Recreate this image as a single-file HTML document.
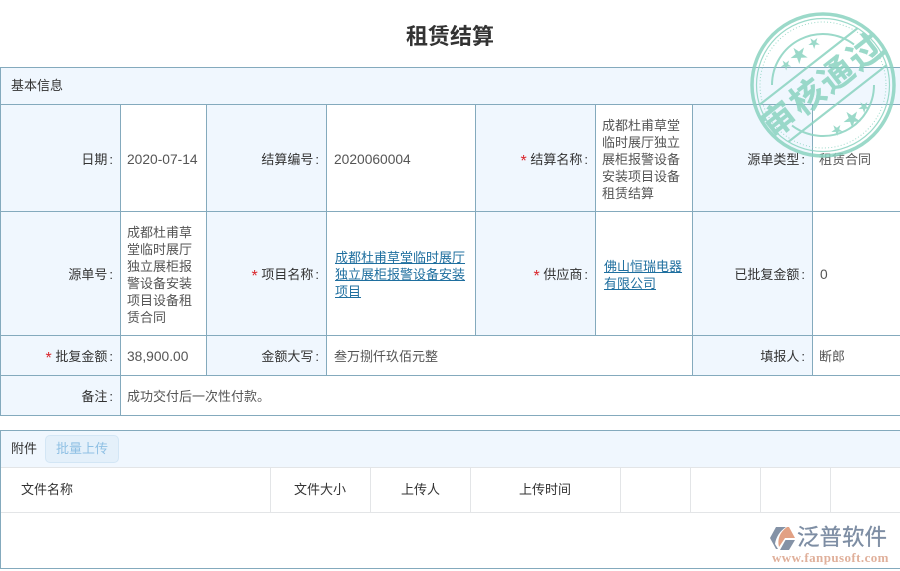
<!DOCTYPE html>
<html lang="zh"><head><meta charset="utf-8"><title>租赁结算</title>
<style>
*{box-sizing:border-box}
html,body{margin:0;padding:0;background:#fff}
body{width:900px;height:571px;position:relative;overflow:hidden;font-family:"Liberation Sans","Noto Sans CJK SC",sans-serif;font-size:13px;color:#333}
.a{position:absolute}
.bg{position:absolute;background:#f0f7fe}
.h{position:absolute;background:#84aabd}
.v{position:absolute;background:#84aabd;width:1px}
.l{position:absolute;text-align:right;line-height:18px;color:#333;white-space:nowrap}
.l i{font-style:normal;margin-left:2px}
.t{position:absolute;line-height:17px;color:#555}
.n{font-size:13.8px}
.s{color:#d9252b;font-size:16px;line-height:10px;vertical-align:-2px}
a{color:#1f6f9f;text-decoration:underline}
.g{position:absolute;background:#e3e5e7}
.c{position:absolute;color:#333;line-height:18px;white-space:nowrap}
</style></head><body>
<div class="a" style="left:0;width:900px;top:21px;text-align:center;font-size:22px;font-weight:bold;line-height:32px;color:#333">租赁结算</div>

<div class="bg" style="left:0;top:67px;width:900px;height:38px"></div>
<div class="bg" style="left:0;top:105px;width:120px;height:310px"></div>
<div class="bg" style="left:207px;top:105px;width:119px;height:270px"></div>
<div class="bg" style="left:476px;top:105px;width:119px;height:230px"></div>
<div class="bg" style="left:693px;top:105px;width:119px;height:270px"></div>

<div class="h" style="left:0;top:67px;width:900px;height:1px"></div>
<div class="h" style="left:0;top:104px;width:900px;height:1px"></div>
<div class="h" style="left:0;top:211px;width:900px;height:1px"></div>
<div class="h" style="left:0;top:335px;width:900px;height:1px"></div>
<div class="h" style="left:0;top:375px;width:900px;height:1px"></div>
<div class="h" style="left:0;top:415px;width:900px;height:1px"></div>
<div class="v" style="left:0;top:67px;height:349px"></div>
<div class="v" style="left:120px;top:104px;height:312px"></div>
<div class="v" style="left:206px;top:104px;height:272px"></div>
<div class="v" style="left:326px;top:104px;height:272px"></div>
<div class="v" style="left:475px;top:104px;height:232px"></div>
<div class="v" style="left:595px;top:104px;height:232px"></div>
<div class="v" style="left:692px;top:104px;height:272px"></div>
<div class="v" style="left:812px;top:104px;height:272px"></div>

<div class="c" style="left:11px;top:77px">基本信息</div>

<div class="l" style="right:787px;top:151px">日期<i>:</i></div>
<div class="t n" style="left:127px;top:151px;white-space:nowrap">2020-07-14</div>
<div class="l" style="right:581px;top:151px">结算编号<i>:</i></div>
<div class="t n" style="left:334px;top:151px;white-space:nowrap">2020060004</div>
<div class="l" style="right:312px;top:151px"><span class="s">*</span> 结算名称<i>:</i></div>
<div class="t" style="left:602px;top:117px;width:84px">成都杜甫草堂临时展厅独立展柜报警设备安装项目设备租赁结算</div>
<div class="l" style="right:95px;top:151px">源单类型<i>:</i></div>
<div class="t" style="left:819px;top:151px;white-space:nowrap">租赁合同</div>

<div class="l" style="right:787px;top:266px">源单号<i>:</i></div>
<div class="t" style="left:127px;top:224px;width:72px">成都杜甫草堂临时展厅独立展柜报警设备安装项目设备租赁合同</div>
<div class="l" style="right:581px;top:266px"><span class="s">*</span> 项目名称<i>:</i></div>
<div class="t" style="left:335px;top:249px;width:132px"><a>成都杜甫草堂临时展厅独立展柜报警设备安装项目</a></div>
<div class="l" style="right:312px;top:266px"><span class="s">*</span> 供应商<i>:</i></div>
<div class="t" style="left:604px;top:258px;width:84px"><a>佛山恒瑞电器有限公司</a></div>
<div class="l" style="right:95px;top:266px">已批复金额<i>:</i></div>
<div class="t n" style="left:820px;top:266px">0</div>

<div class="l" style="right:787px;top:348px"><span class="s">*</span> 批复金额<i>:</i></div>
<div class="t n" style="left:127px;top:348px;white-space:nowrap">38,900.00</div>
<div class="l" style="right:581px;top:348px">金额大写<i>:</i></div>
<div class="t" style="left:334px;top:348px;white-space:nowrap">叁万捌仟玖佰元整</div>
<div class="l" style="right:95px;top:348px">填报人<i>:</i></div>
<div class="t" style="left:819px;top:348px;white-space:nowrap">断郎</div>

<div class="l" style="right:787px;top:388px">备注<i>:</i></div>
<div class="t" style="left:127px;top:388px;white-space:nowrap">成功交付后一次性付款。</div>

<div class="bg" style="left:0;top:430px;width:900px;height:37px"></div>
<div class="h" style="left:0;top:430px;width:900px;height:1px"></div>
<div class="h" style="left:0;top:568px;width:900px;height:1px"></div>
<div class="v" style="left:0;top:430px;height:139px"></div>
<div class="c" style="left:11px;top:440px">附件</div>
<div class="a" style="left:45px;top:435px;width:74px;height:28px;background:#e4f0fa;border:1px solid #d3e6f5;border-radius:5px;color:#8fc0e4;text-align:center;line-height:25px">批量上传</div>
<div class="g" style="left:1px;top:467px;width:899px;height:1px"></div>
<div class="g" style="left:1px;top:512px;width:899px;height:1px"></div>
<div class="g" style="left:270px;top:467px;width:1px;height:45px"></div>
<div class="g" style="left:370px;top:467px;width:1px;height:45px"></div>
<div class="g" style="left:470px;top:467px;width:1px;height:45px"></div>
<div class="g" style="left:620px;top:467px;width:1px;height:45px"></div>
<div class="g" style="left:690px;top:467px;width:1px;height:45px"></div>
<div class="g" style="left:760px;top:467px;width:1px;height:45px"></div>
<div class="g" style="left:830px;top:467px;width:1px;height:45px"></div>
<div class="c" style="left:21px;top:481px">文件名称</div>
<div class="c" style="left:294px;top:481px">文件大小</div>
<div class="c" style="left:401px;top:481px">上传人</div>
<div class="c" style="left:519px;top:481px">上传时间</div>

<!-- stamp -->
<svg class="a" style="left:740px;top:0" width="160" height="170" viewBox="0 0 160 170" fill="none">
<defs>
<clipPath id="cc"><circle r="67"/></clipPath>
<path id="st" d="M0-1 .225-.309H.951L.363.118.588.809 0 .382-.588.809-.363.118-.951-.309H-.225Z" fill="#8ad3c0"/>
</defs>
<g transform="translate(83,85)" opacity=".85">
<circle r="71" stroke="#8ad3c0" stroke-width="3.5"/>
<circle r="66.500" stroke="#8ad3c0" stroke-width="1.2"/>
<circle r="63" stroke="#8ad3c0" stroke-width="1" stroke-dasharray="1 2.2"/>
<path d="M-51 0A51 51 0 0 1 31-40.500M51 0A51 51 0 0 1-31 40.500" stroke="#8ad3c0" stroke-width="2"/>
<g transform="rotate(-38)">
<g clip-path="url(#cc)"><path d="M-80-23.500H80M-80 23.500H80" stroke="#8ad3c0" stroke-width="2.200"/></g>
<text x="0" y="12" text-anchor="middle" font-family="'Noto Sans CJK SC',sans-serif" font-size="34" font-weight="bold" fill="#8ad3c0" stroke="#8ad3c0" stroke-width=".3" letter-spacing="2.500">审核通过</text>
</g>
<use href="#st" transform="translate(-24,-30) rotate(-38) scale(9)"/>
<use href="#st" transform="translate(-9,-42) rotate(-38) scale(6)"/>
<use href="#st" transform="translate(-37,-20) rotate(-38) scale(5.500)"/>
<use href="#st" transform="translate(29,34) rotate(-38) scale(9)"/>
<use href="#st" transform="translate(41,22) rotate(-38) scale(6)"/>
<use href="#st" transform="translate(14,45) rotate(-38) scale(6)"/>
</g>
</svg>

<!-- logo -->
<svg class="a" style="left:770px;top:527px" width="26" height="24" viewBox="0 0 26 24">
<path d="M6 0H16C10 4 6 10 5 17L8 22H6L0 11Z" fill="#8492a6"/>
<path d="M17 0H19L25 11H15L9 20C7 12 10 5 17 0Z" fill="#e2a184"/>
<path d="M15.500 13H25L19 23H10Z" fill="#8492a6"/>
</svg>
<div class="a" style="left:797px;top:523px;font-size:22.5px;line-height:30px;color:#7d8da3;-webkit-text-stroke:.3px #7d8da3;white-space:nowrap">泛普软件</div>
<div class="a" style="left:772px;top:551px;font-family:'Liberation Serif',serif;font-size:13px;font-weight:bold;line-height:14px;color:#e0b09b;letter-spacing:.42px;white-space:nowrap">www.fanpusoft.com</div>
</body></html>
